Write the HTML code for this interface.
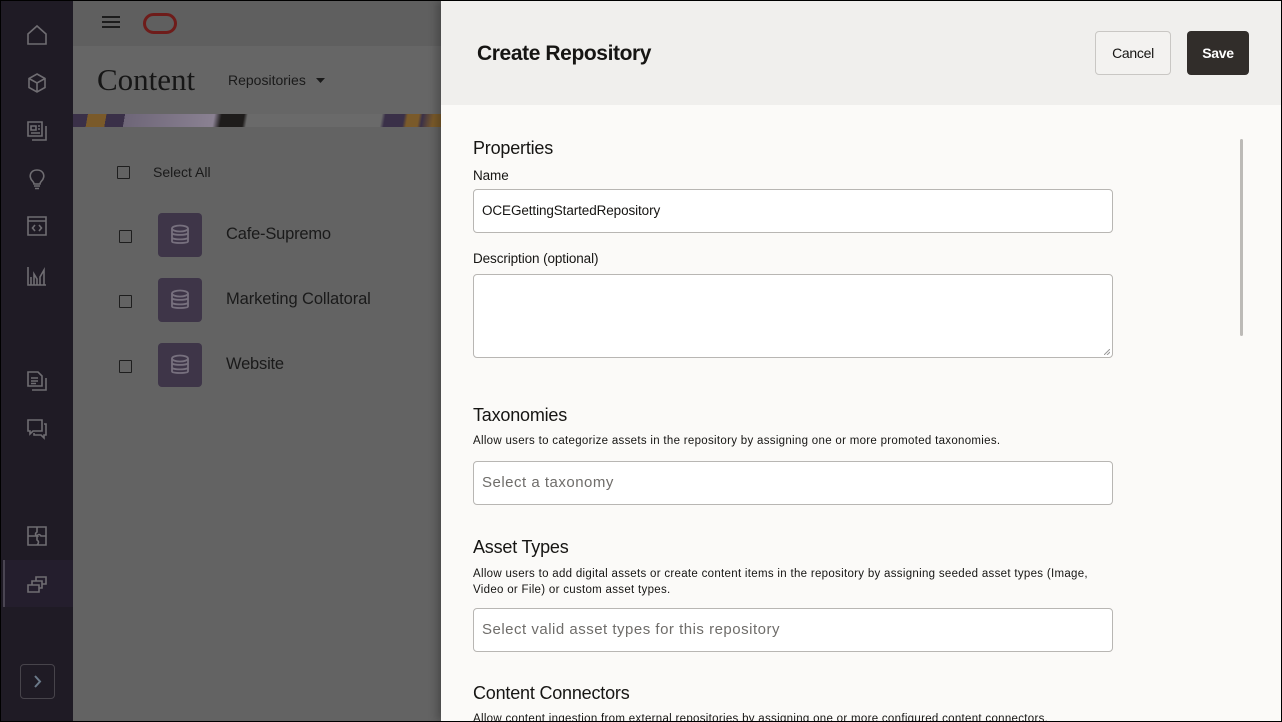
<!DOCTYPE html>
<html><head><style>
*{box-sizing:border-box;margin:0;padding:0}
body{width:1282px;height:722px;overflow:hidden;background:#000;font-family:"Liberation Sans",sans-serif;position:relative}
#wrap{position:absolute;left:1px;top:1px;width:1280px;height:720px;overflow:hidden;background:#636363}
#side{position:absolute;left:0;top:0;width:72px;height:720px;background:#1f1b25}
.ic{position:absolute;left:25px;width:22px;height:22px}
.ic svg{width:22px;height:22px;fill:none;stroke:#6f6d72;stroke-width:1.6}
#top{position:absolute;left:72px;top:0;width:370px;height:45px;background:#5f5f5f}
#hdr{position:absolute;left:72px;top:45px;width:370px;height:68px;background:#666}
#stripe{position:absolute;left:72px;top:113px;width:370px;height:13px;background:linear-gradient(100deg,#3a3048 0,#3a3048 4%,#7a5a2a 4%,#7a5a2a 9%,#3a3048 9%,#3a3048 14%,#6e6678 14%,#8a8192 38%,#1e1c1b 40%,#1e1c1b 46%,#6a6a6a 47%,#6a6a6a 83%,#3a3048 84%,#3a3048 89%,#7a5a2a 90%,#7a5a2a 93%,#3a3048 94%,#7a5a2a 97%)}
.t{position:absolute;color:#1a1a1a;white-space:nowrap}
.cb{position:absolute;width:13px;height:13px;border:1.5px solid #1e1e1e;border-radius:1px}
.db{position:absolute;left:157px;width:44px;height:44px;background:#3e3548;border-radius:4px}
.db svg{position:absolute;left:12px;top:11px;width:20px;height:22px;fill:none;stroke:#77707e;stroke-width:1.8}
#panel{position:absolute;left:440px;top:0;width:840px;height:720px;background:#fbfaf8;box-shadow:-4px 0 8px rgba(0,0,0,.25)}
#ph{position:absolute;left:0;top:0;width:840px;height:104px;background:#f0efed}
.p{position:absolute;color:#161513;white-space:nowrap}
.in{position:absolute;left:32px;width:640px;background:#fff;border:1px solid #b8b6b3;border-radius:4px}
.h{font-size:18px;letter-spacing:-.2px}
.s{font-size:11.5px;letter-spacing:.3px}
.l{font-size:13.5px;letter-spacing:-.1px}
</style></head><body><div id="wrap">
<div id="side">
 <div class="ic" style="top:23px"><svg viewBox="0 0 22 22"><path d="M2 10 L11 2 L20 10 V20 H2 Z"/></svg></div>
 <div class="ic" style="top:71px"><svg viewBox="0 0 22 22"><path d="M11 2 L19 6.5 V15.5 L11 20 L3 15.5 V6.5 Z M3 6.5 L11 11 L19 6.5 M11 11 V20"/></svg></div>
 <div class="ic" style="top:119px"><svg viewBox="0 0 22 22"><path d="M2 2 H16 V16 H2 Z M6 20 H20 V6 M5 6 H10 V10 H5 Z M12 6 H14 M12 9 H14 M5 13 H14"/></svg></div>
 <div class="ic" style="top:167px"><svg viewBox="0 0 22 22"><path d="M11 2 C5 2 3 7 5 11 C6 13 8 14 8 16 H14 C14 14 16 13 17 11 C19 7 17 2 11 2 Z M8 18 H14 M9 20.5 H13"/></svg></div>
 <div class="ic" style="top:214px"><svg viewBox="0 0 22 22"><path d="M2 2 H20 V20 H2 Z M2 6 H20 M9 10 L6.5 13 L9 16 M13 10 L15.5 13 L13 16"/></svg></div>
 <div class="ic" style="top:264px"><svg viewBox="0 0 22 22"><path d="M2 2 V20 H20 M5 20 V12 M8 20 V9 L11 14 V20 M14 20 V12 L18 5 V20"/></svg></div>
 <div class="ic" style="top:369px"><svg viewBox="0 0 22 22"><path d="M2 2 H12 L16 6 V16 H2 Z M6 20 H20 V8 M5 8 H12 M5 11 H12 M5 13.5 H10"/></svg></div>
 <div class="ic" style="top:417px"><svg viewBox="0 0 22 22"><path d="M2 2 H16 V13 H7 L4 16 V13 H2 Z M18 6 H20 V17 H18 V20 L15 17 H8 V15"/></svg></div>
 <div class="ic" style="top:524px"><svg viewBox="0 0 22 22"><path d="M2 2 H20 V20 H2 Z M11 2 V7 Q8 9 11 11 H2 M11 11 Q13 8 15 11 H20 M11 11 V15 Q14 17 11 20"/></svg></div>
 <div style="position:absolute;left:2px;top:559px;width:70px;height:47px;background:#241e2d;border-left:2px solid #4a4552"></div>
 <div class="ic" style="top:572px"><svg viewBox="0 0 22 22"><path d="M2 12 H13 V19 H2 Z M6 12 V8 H16 V15 H13 M10 8 V4 H20 V11 H16"/></svg></div>
 <div style="position:absolute;left:19px;top:663px;width:35px;height:35px;border:1px solid #47444b;border-radius:4px"><svg viewBox="0 0 35 35" width="35" height="35" style="position:absolute;left:-1px;top:-1px"><path d="M15 12 L20 17.5 L15 23" fill="none" stroke="#6b7a8a" stroke-width="2"/></svg></div>
</div>
<div id="top">
 <svg style="position:absolute;left:29px;top:14px" width="18" height="14"><path d="M0 2H18M0 7H18M0 12H18" stroke="#1c1c1c" stroke-width="2"/></svg>
 <div style="position:absolute;left:70px;top:12px;width:34px;height:21px;border:3.5px solid #6e1c1a;border-radius:11px"></div>
</div>
<div id="hdr">
 <div class="t" style="left:24px;top:16px;font-family:'Liberation Serif',serif;font-size:31px;color:#161616">Content</div>
 <div class="t" style="left:155px;top:26px;font-size:14px;letter-spacing:0">Repositories</div>
 <svg style="position:absolute;left:243px;top:32px" width="9" height="6"><path d="M0 0H9L4.5 5Z" fill="#1a1a1a"/></svg>
</div>
<div id="stripe"></div>
<div class="cb" style="left:116px;top:165px"></div>
<div class="t" style="left:152px;top:163px;font-size:14px;letter-spacing:0">Select All</div>
<div class="cb" style="left:118px;top:229px"></div>
<div class="db" style="top:212px"><svg viewBox="0 0 20 22"><ellipse cx="10" cy="4.5" rx="8" ry="3"/><path d="M2 4.5V17.5C2 19.5 18 19.5 18 17.5V4.5M2 9C2 11.5 18 11.5 18 9M2 13.5C2 16 18 16 18 13.5"/></svg></div>
<div class="t" style="left:225px;top:224px;font-size:16.5px;letter-spacing:-.2px">Cafe-Supremo</div>
<div class="cb" style="left:118px;top:294px"></div>
<div class="db" style="top:277px"><svg viewBox="0 0 20 22"><ellipse cx="10" cy="4.5" rx="8" ry="3"/><path d="M2 4.5V17.5C2 19.5 18 19.5 18 17.5V4.5M2 9C2 11.5 18 11.5 18 9M2 13.5C2 16 18 16 18 13.5"/></svg></div>
<div class="t" style="left:225px;top:289px;font-size:16.5px;letter-spacing:-.1px">Marketing Collatoral</div>
<div class="cb" style="left:118px;top:359px"></div>
<div class="db" style="top:342px"><svg viewBox="0 0 20 22"><ellipse cx="10" cy="4.5" rx="8" ry="3"/><path d="M2 4.5V17.5C2 19.5 18 19.5 18 17.5V4.5M2 9C2 11.5 18 11.5 18 9M2 13.5C2 16 18 16 18 13.5"/></svg></div>
<div class="t" style="left:225px;top:354px;font-size:16.5px;letter-spacing:-.2px">Website</div>

<div id="panel">
 <div id="ph">
  <div class="p" style="left:36px;top:41px;font-size:21px;font-weight:bold;letter-spacing:-.4px">Create Repository</div>
  <div style="position:absolute;left:654px;top:30px;width:76px;height:44px;border:1px solid #c9c7c4;border-radius:4px;background:#f3f2f0;font-size:14px;text-align:center;line-height:42px;color:#161513;letter-spacing:-.3px">Cancel</div>
  <div style="position:absolute;left:746px;top:30px;width:62px;height:44px;border-radius:4px;background:#312d2a;font-size:14px;font-weight:bold;text-align:center;line-height:44px;color:#fff;letter-spacing:-.3px">Save</div>
 </div>
 <div style="position:absolute;left:799px;top:138px;width:3px;height:197px;background:#bcbab7;border-radius:2px"></div>
 <div class="p h" style="left:32px;top:137px">Properties</div>
 <div class="p l" style="left:32px;top:167px">Name</div>
 <div class="in" style="top:188px;height:44px"><span class="p" style="left:8px;top:13px;font-size:13.5px;letter-spacing:-.1px">OCEGettingStartedRepository</span></div>
 <div class="p l" style="left:32px;top:250px">Description (optional)</div>
 <div class="in" style="top:273px;height:84px"><svg style="position:absolute;right:2px;bottom:2px" width="6" height="6"><path d="M0 6L6 0M3 6L6 3" stroke="#999" stroke-width="1"/></svg></div>
 <div class="p h" style="left:32px;top:404px">Taxonomies</div>
 <div class="p s" style="left:32px;top:434px">Allow users to categorize assets in the repository by assigning one or more promoted taxonomies.</div>
 <div class="in" style="top:460px;height:44px"><span class="p" style="left:8px;top:12px;font-size:15px;letter-spacing:.5px;color:#6f6d6a">Select a taxonomy</span></div>
 <div class="p h" style="left:32px;top:536px">Asset Types</div>
 <div class="p s" style="left:32px;top:565px;line-height:16px">Allow users to add digital assets or create content items in the repository by assigning seeded asset types (Image,<br>Video or File) or custom asset types.</div>
 <div class="in" style="top:607px;height:44px"><span class="p" style="left:8px;top:12px;font-size:15px;letter-spacing:.5px;color:#6f6d6a">Select valid asset types for this repository</span></div>
 <div class="p h" style="left:32px;top:682px">Content Connectors</div>
 <div class="p s" style="left:32px;top:712px">Allow content ingestion from external repositories by assigning one or more configured content connectors.</div>
</div>
</div></body></html>
